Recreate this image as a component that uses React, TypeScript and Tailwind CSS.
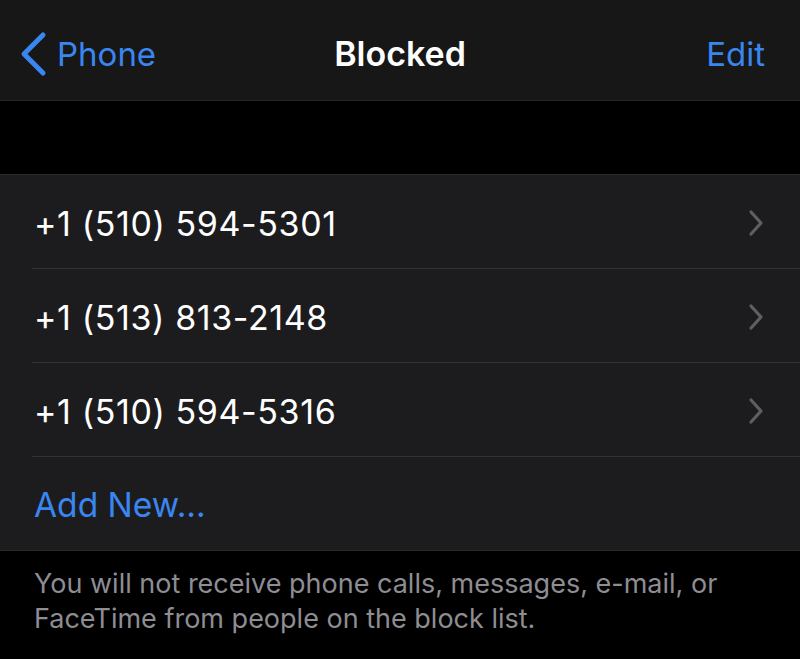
import React from "react";

const Chevron = () => (
  <svg width="16" height="28" viewBox="0 0 16 28" fill="none">
    <path d="M3 3 L13 14 L3 25" stroke="#5f5f63" strokeWidth="3.2" strokeLinecap="round" strokeLinejoin="round" />
  </svg>
);

const numbers = ["+1 (510) 594-5301", "+1 (513) 813-2148", "+1 (510) 594-5316"];

export default function App() {
  return (
    <div className="w-[800px] h-[659px] bg-black flex flex-col overflow-hidden" style={{ fontFamily: "Inter, 'Noto Sans', sans-serif" }}>
      <div className="h-[101px] bg-[#171717] border-b border-[#262626] flex items-center relative shrink-0 pt-[8px]">
        <div className="flex items-center pl-[19px] gap-[10px] text-[#3a86f0]">
          <svg width="28" height="46" viewBox="0 0 28 46" fill="none">
            <path d="M24 4 L5 23 L24 42" stroke="#3a86f0" strokeWidth="5" strokeLinecap="round" strokeLinejoin="round" />
          </svg>
          <span className="text-[33px] leading-none">Phone</span>
        </div>
        <div className="absolute left-0 right-0 text-center text-white font-semibold text-[34px] leading-none pointer-events-none">Blocked</div>
        <div className="ml-auto pr-[35px] text-[#3a86f0] text-[33px] leading-none">Edit</div>
      </div>
      <div className="h-[73px] shrink-0 bg-black" />
      <div className="bg-[#1c1c1e] border-t border-b border-[#2a2a2c] shrink-0">
        {numbers.map((n) => (
          <div key={n} className="pl-[32px]">
            <div className="h-[94px] border-b border-[#323234] flex items-center pr-[36px]">
              <span className="text-white text-[34px] leading-none pl-[2px] pt-[5px] tracking-[0.6px]">{n}</span>
              <span className="ml-auto flex items-center pt-[2px]"><Chevron /></span>
            </div>
          </div>
        ))}
        <div className="h-[93px] flex items-center pl-[34px]">
          <span className="text-[#3a86f0] text-[33.5px] leading-none pt-[5px]">Add New...</span>
        </div>
      </div>
      <div className="pl-[34px] pt-[15px] text-[#8d8d93] text-[27px] leading-[35px]">
        <div>You will not receive phone calls, messages, e-mail, or</div>
        <div>FaceTime from people on the block list.</div>
      </div>
    </div>
  );
}
